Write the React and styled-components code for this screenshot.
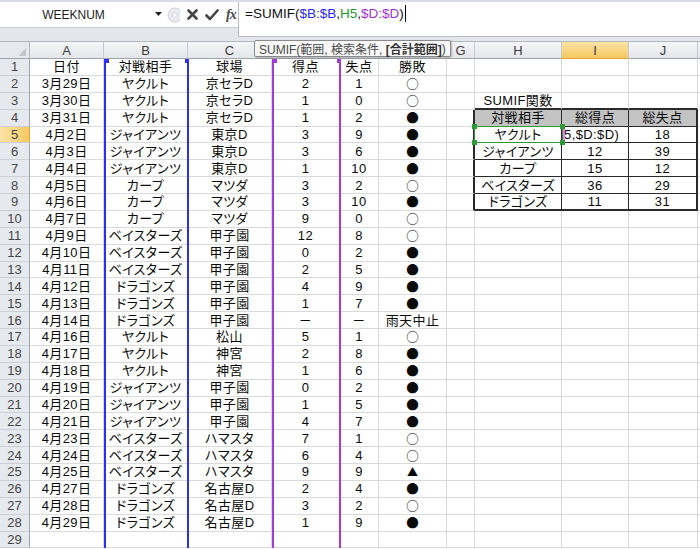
import React from "react";
import styled, { createGlobalStyle } from "styled-components";

const GlobalStyle = createGlobalStyle`
  html, body { margin: 0; padding: 0; background: #fff; }
  body {
    width: 700px;
    height: 549px;
    overflow: hidden;
    font-family: "Liberation Sans", "Noto Sans CJK JP", sans-serif;
  }
`;

const COLS = [
  { key: "A", width: 74 },
  { key: "B", width: 84 },
  { key: "C", width: 84 },
  { key: "D", width: 68 },
  { key: "E", width: 39 },
  { key: "F", width: 68 },
  { key: "G", width: 28 },
  { key: "H", width: 87 },
  { key: "I", width: 67 },
  { key: "J", width: 69 },
];

const TEMPLATE_COLS = `30px ${COLS.map((c) => c.width + "px").join(" ")} 1fr`;
const TEMPLATE_ROWS = "17px repeat(29, 16.88px)";

const games = [
  ["日付", "対戦相手", "球場", "得点", "失点", "勝敗"],
  ["3月29日", "ヤクルト", "京セラD", "2", "1", "○"],
  ["3月30日", "ヤクルト", "京セラD", "1", "0", "○"],
  ["3月31日", "ヤクルト", "京セラD", "1", "2", "●"],
  ["4月2日", "ジャイアンツ", "東京D", "3", "9", "●"],
  ["4月3日", "ジャイアンツ", "東京D", "3", "6", "●"],
  ["4月4日", "ジャイアンツ", "東京D", "1", "10", "●"],
  ["4月5日", "カープ", "マツダ", "3", "2", "○"],
  ["4月6日", "カープ", "マツダ", "3", "10", "●"],
  ["4月7日", "カープ", "マツダ", "9", "0", "○"],
  ["4月9日", "ベイスターズ", "甲子園", "12", "8", "○"],
  ["4月10日", "ベイスターズ", "甲子園", "0", "2", "●"],
  ["4月11日", "ベイスターズ", "甲子園", "2", "5", "●"],
  ["4月12日", "ドラゴンズ", "甲子園", "4", "9", "●"],
  ["4月13日", "ドラゴンズ", "甲子園", "1", "7", "●"],
  ["4月14日", "ドラゴンズ", "甲子園", "－", "－", "雨天中止"],
  ["4月16日", "ヤクルト", "松山", "5", "1", "○"],
  ["4月17日", "ヤクルト", "神宮", "2", "8", "●"],
  ["4月18日", "ヤクルト", "神宮", "1", "6", "●"],
  ["4月19日", "ジャイアンツ", "甲子園", "0", "2", "●"],
  ["4月20日", "ジャイアンツ", "甲子園", "1", "5", "●"],
  ["4月21日", "ジャイアンツ", "甲子園", "4", "7", "●"],
  ["4月23日", "ベイスターズ", "ハマスタ", "7", "1", "○"],
  ["4月24日", "ベイスターズ", "ハマスタ", "6", "4", "○"],
  ["4月25日", "ベイスターズ", "ハマスタ", "9", "9", "▲"],
  ["4月27日", "ドラゴンズ", "名古屋D", "2", "4", "●"],
  ["4月28日", "ドラゴンズ", "名古屋D", "3", "2", "○"],
  ["4月29日", "ドラゴンズ", "名古屋D", "1", "9", "●"],
];

// SUMIF table in H3:J9
const summary = {
  3: ["SUMIF関数", "", ""],
  4: ["対戦相手", "総得点", "総失点"],
  5: ["ヤクルト", "5,$D:$D)", "18"],
  6: ["ジャイアンツ", "12", "39"],
  7: ["カープ", "15", "12"],
  8: ["ベイスターズ", "36", "29"],
  9: ["ドラゴンズ", "11", "31"],
};

const Page = styled.div`
  position: relative;
  width: 700px;
  height: 549px;
  overflow: hidden;
  background: #fff;
`;

/* ---------- formula bar ---------- */

const FormulaBar = styled.div`
  display: flex;
  height: 37px;
  background: #e3e6ea;
  border-top: 2px solid #d9dde2;
  box-sizing: border-box;
`;

const NameArea = styled.div`
  width: 238px;
  display: flex;
  align-items: center;
  height: 25px;
  background: #fff;
  border-bottom: 1px solid #c9cdd3;
`;

const NameBox = styled.div`
  position: relative;
  width: 165px;
  height: 100%;
  display: flex;
  align-items: center;
  justify-content: center;
  padding-right: 18px;
  box-sizing: border-box;
  font-size: 12px;
  color: #1e1e1e;
`;

const DropArrow = styled.svg`
  position: absolute;
  right: 3px;
  top: 10px;
`;

const Tools = styled.div`
  display: flex;
  align-items: center;
  gap: 7px;
  height: 100%;
  padding-left: 2px;
`;

const FxLabel = styled.span`
  font-family: "Liberation Serif", serif;
  font-style: italic;
  font-size: 14px;
  font-weight: bold;
  color: #4a4a4a;
  letter-spacing: -1px;
`;

const FormulaInput = styled.div`
  flex: 1;
  height: 35px;
  background: #fff;
  border-left: 1px solid #b9bec5;
  border-bottom: 1px solid #b9bec5;
  box-sizing: border-box;
  padding: 3px 0 0 6px;
  font-size: 13.5px;
  line-height: 17px;
  color: #111;
  display: flex;
  align-items: flex-start;
`;

const Ref = styled.span`
  color: ${(p) => p.$c};
`;

const Caret = styled.span`
  display: inline-block;
  width: 1px;
  height: 17px;
  background: #000;
  margin-left: 1px;
`;

const Band = styled.div`
  height: 5px;
  background: #e3e6ea;
  border-bottom: 1px solid #b4b9c0;
  box-sizing: border-box;
`;

/* ---------- sheet ---------- */

const SheetWrap = styled.div`
  position: relative;
`;

const Sheet = styled.div`
  display: grid;
  grid-template-columns: ${TEMPLATE_COLS};
  grid-template-rows: ${TEMPLATE_ROWS};
  font-size: 13px;
  font-feature-settings: "palt";
`;

const Overlay = styled.div`
  position: absolute;
  inset: 0;
  display: grid;
  grid-template-columns: ${TEMPLATE_COLS};
  grid-template-rows: ${TEMPLATE_ROWS};
  pointer-events: none;
`;

const Corner = styled.div`
  position: relative;
  background: #e6e9ed;
  border-right: 1px solid #b4b9c0;
  border-bottom: 1px solid #9fa5ad;
  &::after {
    content: "";
    position: absolute;
    right: 3px;
    bottom: 2px;
    border-left: 8px solid transparent;
    border-bottom: 8px solid #c4c8ce;
  }
`;

const ColHead = styled.div`
  display: flex;
  align-items: center;
  justify-content: center;
  color: #3c3c3c;
  font-size: 13px;
  background: ${(p) =>
    p.$active
      ? "linear-gradient(#fbe3a6, #f4c962)"
      : "linear-gradient(#f5f6f8, #e3e6ea)"};
  border-right: 1px solid #c6cad0;
  border-bottom: 1px solid ${(p) => (p.$active ? "#e8a43a" : "#9fa5ad")};
`;

const RowHead = styled.div`
  display: flex;
  align-items: center;
  justify-content: center;
  color: #454545;
  font-size: 13px;
  background: ${(p) =>
    p.$active ? "linear-gradient(90deg, #fbe3a6, #f4c962)" : "#e6e9ed"};
  border-right: 1px solid ${(p) => (p.$active ? "#e8a43a" : "#9fa5ad")};
  border-bottom: 1px solid #cbcfd5;
`;

const Cell = styled.div`
  display: flex;
  align-items: center;
  justify-content: ${(p) => (p.$left ? "flex-start" : "center")};
  padding: 0 2px;
  overflow: hidden;
  white-space: nowrap;
  letter-spacing: 0.4px;
  color: #0a0a0a;
  background: ${(p) => (p.$head ? "#c3c3c3" : "#fff")};
  border-right: ${(p) => (p.$rd ? `${p.$rd}px solid #2a2a2a` : "1px solid #dadada")};
  border-bottom: ${(p) => (p.$bd ? `${p.$bd}px solid #2a2a2a` : "1px solid #dadada")};
  line-height: 1;
`;

const Mark = styled.span`
  font-family: "Noto Sans CJK JP", sans-serif;
  font-size: ${(p) => (p.$tri ? "11px" : "12.5px")};
  line-height: 15px;
  letter-spacing: 0;
`;

const RangeLines = styled.div`
  grid-column: ${(p) => p.$col};
  grid-row: 2 / -1;
  position: relative;
  margin: 0 -1px 0 0;
  border-left: 2px solid ${(p) => p.$color};
  border-right: 2px solid ${(p) => p.$color};
  &::before,
  &::after {
    content: "";
    position: absolute;
    top: 0;
    width: 4px;
    height: 4px;
    background: ${(p) => p.$color};
  }
  &::before { left: -1px; }
  &::after { right: -2px; }
`;

const Selection = styled.div`
  grid-column: 9;
  grid-row: 6;
  position: relative;
  margin: -1px -1px 0 -1px;
  border: 1px solid #2e9b36;
`;

const Handle = styled.span`
  position: absolute;
  width: 5px;
  height: 5px;
  background: #2e9b36;
  ${(p) => (p.$top ? "top: -3px;" : "bottom: -3px;")}
  ${(p) => (p.$left ? "left: -3px;" : "right: -3px;")}
`;

const EditMark = styled.div`
  grid-column: 10;
  grid-row: 6;
  margin-left: 1px;
  border-left: 2px solid #ea7ee6;
`;

const Tooltip = styled.div`
  position: absolute;
  left: 254px;
  top: 40px;
  height: 17px;
  padding: 0 4px;
  display: flex;
  align-items: center;
  background: #f8f8f8;
  border: 1px solid #8a8a8a;
  border-radius: 2px;
  box-shadow: 1px 1px 2px rgba(0, 0, 0, 0.25);
  font-size: 12px;
  color: #4a4a4a;
  white-space: nowrap;
  z-index: 5;
  box-sizing: border-box;
  b { color: #333; }
`;

const XIcon = () => (
  <svg width="11" height="11" viewBox="0 0 11 11">
    <path d="M1.5 1.5 L9.5 9.5 M9.5 1.5 L1.5 9.5" stroke="#454545" strokeWidth="2.6" strokeLinecap="round" />
  </svg>
);

const CheckIcon = () => (
  <svg width="14" height="12" viewBox="0 0 14 12">
    <path d="M1.5 6.5 L5 10 L12.5 1.5" stroke="#454545" strokeWidth="2.6" fill="none" strokeLinecap="round" strokeLinejoin="round" />
  </svg>
);

const GripIcon = () => (
  <svg width="13" height="20" viewBox="0 0 13 20">
    <circle cx="8" cy="10" r="7" fill="#e9ebee" stroke="#c9cdd2" />
    <circle cx="8" cy="10" r="2.5" fill="#f8f9fa" stroke="#d5d8dc" />
  </svg>
);

function rightDark(r, c) {
  if (r < 4 || r > 9) return 0;
  if (c === 6 || c === 9) return 2;
  if (c === 7 || c === 8) return 1;
  return 0;
}

function bottomDark(r, c) {
  if (c < 7 || c > 9) return 0;
  if (r === 3 || r === 9) return 2;
  if (r >= 4 && r <= 8) return 1;
  return 0;
}

function cellValue(r, c) {
  if (c <= 5) return games[r - 1] ? games[r - 1][c] : "";
  if (c >= 7 && summary[r]) return summary[r][c - 7];
  return "";
}

function renderValue(v) {
  if (v === "○" || v === "●") return <Mark>{v}</Mark>;
  if (v === "▲") return <Mark $tri>{v}</Mark>;
  return v;
}

const App = () => {
  const rows = [];
  for (let r = 1; r <= 29; r++) {
    rows.push(
      <RowHead key={`h${r}`} $active={r === 5}>{r}</RowHead>
    );
    COLS.forEach((col, c) => {
      const v = cellValue(r, c);
      rows.push(
        <Cell
          key={`${col.key}${r}`}
          $head={r === 4 && c >= 7}
          $left={r === 5 && c === 8}
          $rd={rightDark(r, c)}
          $bd={bottomDark(r, c)}
        >
          {renderValue(v)}
        </Cell>
      );
    });
    rows.push(<Cell key={`z${r}`} />);
  }

  return (
    <Page>
      <GlobalStyle />
      <FormulaBar>
        <NameArea>
          <NameBox>
            WEEKNUM
            <DropArrow width="7" height="4" viewBox="0 0 7 4">
              <path d="M0 0 H7 L3.5 4 Z" fill="#222" />
            </DropArrow>
          </NameBox>
          <Tools>
            <GripIcon />
            <XIcon />
            <CheckIcon />
            <FxLabel>fx</FxLabel>
          </Tools>
        </NameArea>
        <FormulaInput>
          =SUMIF(<Ref $c="#2a2aff">$B:$B</Ref>,<Ref $c="#1f9a2a">H5</Ref>,
          <Ref $c="#a133d6">$D:$D</Ref>)<Caret />
        </FormulaInput>
      </FormulaBar>
      <Band />
      <SheetWrap>
        <Sheet>
          <Corner />
          {COLS.map((col) => (
            <ColHead key={col.key} $active={col.key === "I"}>{col.key}</ColHead>
          ))}
          <ColHead />
          {rows}
        </Sheet>
        <Overlay>
          <RangeLines $col={3} $color="#2d2dff" />
          <RangeLines $col={5} $color="#a43ad8" />
          <EditMark />
          <Selection>
            <Handle $top $left />
            <Handle $top />
            <Handle $left />
            <Handle />
          </Selection>
        </Overlay>
      </SheetWrap>
      <Tooltip>
        SUMIF(範囲, 検索条件,&nbsp;<b>[合計範囲]</b>)
      </Tooltip>
    </Page>
  );
};

export default App;
